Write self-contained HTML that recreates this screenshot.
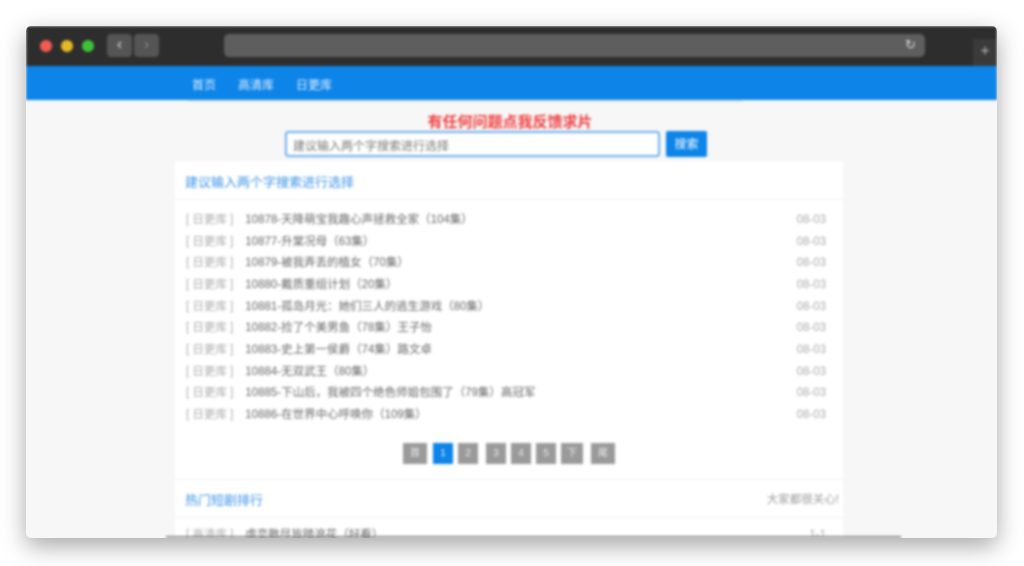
<!DOCTYPE html>
<html><head><meta charset="utf-8"><style>
*{margin:0;padding:0;box-sizing:border-box}
body{width:1024px;height:566px;background:#fff;font-family:"Liberation Sans","Noto Sans CJK SC",sans-serif;overflow:hidden;position:relative}
.win{position:absolute;left:26px;top:26px;width:971px;height:512px;background:#f7f7f7;border-radius:5px;overflow:hidden;box-shadow:0 8px 24px rgba(0,0,0,.35)}
.inner{position:absolute;left:0;top:0;width:971px;height:512px;filter:blur(1.4px)}
.tb{position:absolute;left:0;top:0;width:971px;height:40px;background:#2d2d2d}
.dot{position:absolute;top:14px;width:12px;height:12px;border-radius:50%}
.nb{position:absolute;top:8px;width:25px;height:23px;background:#555;border-radius:4px;color:#ddd;font-size:16px;text-align:center;line-height:22px}
.url{position:absolute;left:198px;top:8px;width:701px;height:23px;background:#5e5e5e;border-radius:5px}
.nav{position:absolute;left:0;top:40px;width:971px;height:34px;background:#0c84e8}
.nav span{position:absolute;top:10px;color:#e8f2ff;font-size:12px}
.red{position:absolute;left:0;width:968px;top:85px;text-align:center;color:#f03c3c;font-size:15px;font-weight:bold}
.inp{position:absolute;left:259px;top:105px;width:375px;height:26px;border:2px solid #6aaef0;background:#fff;border-radius:3px;font-size:12px;color:#777;padding:4px 6px}
.btn{position:absolute;left:640px;top:105px;width:41px;height:26px;background:#0c84e8;color:#fff;font-size:12px;text-align:center;line-height:26px;border-radius:2px}
.panel{position:absolute;left:149px;top:135px;width:668px;height:400px;background:#fff}
.h{position:absolute;left:10px;color:#3b93e8;font-size:13px}
.sep{position:absolute;left:0;width:668px;height:1px;background:#f0f0f0}
.row{position:absolute;left:11px;width:640px;font-size:11.5px;color:#666;height:16px;line-height:16px}
.row .c{color:#aaa;margin-right:12px}
.row .d{position:absolute;right:0;top:0;color:#aaa;line-height:16px}
.pg{position:absolute;top:282px;height:21px;background:#9a9a9a;color:#eee;font-size:10px;text-align:center;line-height:21px}
</style></head><body>
<div class="win"><div class="inner">
<div class="tb">
<div class="dot" style="left:14px;background:#f25a52"></div>
<div class="dot" style="left:35px;background:#e5b827"></div>
<div class="dot" style="left:56px;background:#3fc237"></div>
<div class="nb" style="left:81px">‹</div>
<div class="nb" style="left:108px;color:#888">›</div>
<div class="url"></div>
<div style="position:absolute;left:879px;top:11px;color:#ddd;font-size:13px">↻</div>
<div style="position:absolute;left:947px;top:13px;width:24px;height:27px;background:#3a3a3a;color:#bbb;text-align:center;font-size:16px;line-height:26px">+</div>
</div>
<div class="nav"><span style="left:166px">首页</span><span style="left:212px">高清库</span><span style="left:270px">日更库</span></div>
<div style="position:absolute;left:162px;top:74px;width:554px;height:2px;background:#e6e6e6"></div>
<div class="red">有任何问题点我反馈求片</div>
<div class="inp">建议输入两个字搜索进行选择</div>
<div class="btn">搜索</div>
<div class="panel">
<div class="h" style="top:11px">建议输入两个字搜索进行选择</div>
<div class="sep" style="top:38px"></div>
<div class="row" style="top:51px"><span class="c">[ 日更库 ]</span>10878-天降萌宝我趣心声拯救全家（104集）<span class="d">08-03</span></div>
<div class="row" style="top:73px"><span class="c">[ 日更库 ]</span>10877-升棠况母（63集）<span class="d">08-03</span></div>
<div class="row" style="top:94px"><span class="c">[ 日更库 ]</span>10879-被我弄丢的植女（70集）<span class="d">08-03</span></div>
<div class="row" style="top:116px"><span class="c">[ 日更库 ]</span>10880-戴质重组计划（20集）<span class="d">08-03</span></div>
<div class="row" style="top:138px"><span class="c">[ 日更库 ]</span>10881-孤岛月光：她们三人的逃生游戏（80集）<span class="d">08-03</span></div>
<div class="row" style="top:159px"><span class="c">[ 日更库 ]</span>10882-捡了个美男鱼（78集）王子怡<span class="d">08-03</span></div>
<div class="row" style="top:181px"><span class="c">[ 日更库 ]</span>10883-史上第一侯爵（74集）路文卓<span class="d">08-03</span></div>
<div class="row" style="top:203px"><span class="c">[ 日更库 ]</span>10884-无双武王（80集）<span class="d">08-03</span></div>
<div class="row" style="top:224px"><span class="c">[ 日更库 ]</span>10885-下山后，我被四个绝色师姐包围了（79集）高冠军<span class="d">08-03</span></div>
<div class="row" style="top:246px"><span class="c">[ 日更库 ]</span>10886-在世界中心呼唤你（109集）<span class="d">08-03</span></div>
<div class="pg" style="left:228px;width:24px">首</div>
<div class="pg" style="left:258px;width:20px;background:#0c84e8">1</div>
<div class="pg" style="left:283px;width:20px">2</div>
<div class="pg" style="left:311px;width:20px">3</div>
<div class="pg" style="left:336px;width:20px">4</div>
<div class="pg" style="left:361px;width:20px">5</div>
<div class="pg" style="left:386px;width:22px">下</div>
<div class="pg" style="left:416px;width:24px">尾</div>
<div class="sep" style="top:318px"></div>
<div class="h" style="top:329px">热门短剧排行</div>
<div style="position:absolute;right:4px;top:330px;color:#999;font-size:11.5px">大家都很关心!</div>
<div class="sep" style="top:356px"></div>
<div class="row" style="top:366px"><span class="c">[ 高清库 ]</span>虐恋散尽皆踏浪花（好看）<span class="d">1-1</span></div>
</div>
<div style="position:absolute;left:140px;top:510px;width:735px;height:2px;background:#888"></div>
</div></div>
</body></html>
